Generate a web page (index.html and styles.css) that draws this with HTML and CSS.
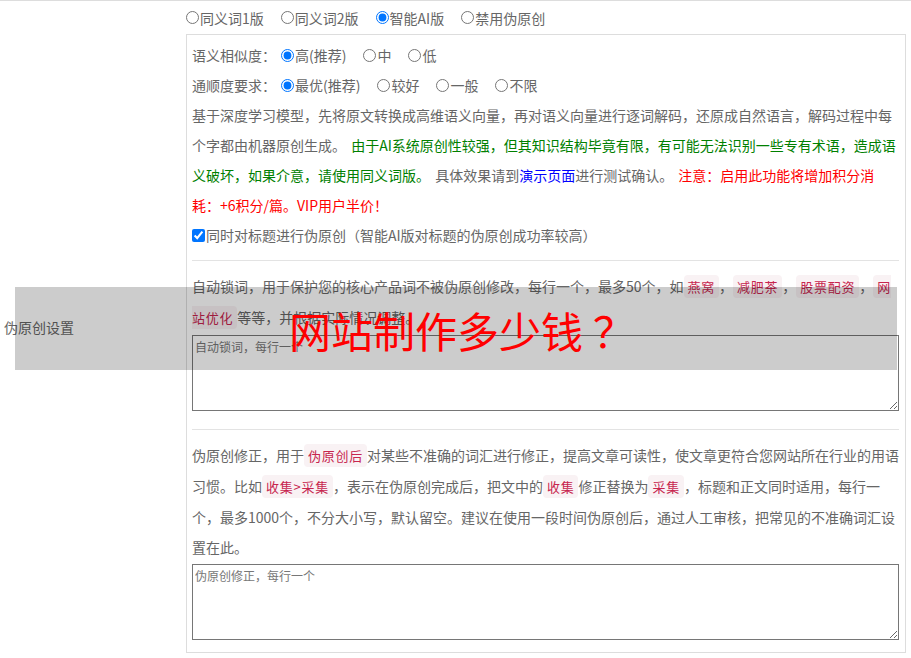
FILE: index.html
```html
<!DOCTYPE html>
<html lang="zh-CN">
<head>
<meta charset="utf-8">
<title>伪原创设置</title>
<link rel="stylesheet" href="styles.css">
</head>
<body>
<div class="form-table">
  <div class="row">
    <div class="th">伪原创设置</div>
    <div class="td">
      <div class="mode-row">
        <label class="opt"><input type="radio" name="mode">同义词1版</label>
        <label class="opt"><input type="radio" name="mode">同义词2版</label>
        <label class="opt"><input type="radio" name="mode" checked>智能AI版</label>
        <label class="opt"><input type="radio" name="mode">禁用伪原创</label>
      </div>
      <div class="panel">
        <div class="line">
          <span class="lbl">语义相似度：</span>
          <label class="opt"><input type="radio" name="sim" checked>高(推荐)</label>
          <label class="opt"><input type="radio" name="sim">中</label>
          <label class="opt"><input type="radio" name="sim">低</label>
        </div>
        <div class="line">
          <span class="lbl">通顺度要求：</span>
          <label class="opt"><input type="radio" name="flu" checked>最优(推荐)</label>
          <label class="opt"><input type="radio" name="flu">较好</label>
          <label class="opt"><input type="radio" name="flu">一般</label>
          <label class="opt"><input type="radio" name="flu">不限</label>
        </div>
        <p class="desc">基于深度学习模型，先将原文转换成高维语义向量，再对语义向量进行逐词解码，还原成自然语言，解码过程中每个字都由机器原创生成。 <span class="green">由于AI系统原创性较强，但其知识结构毕竟有限，有可能无法识别一些专有术语，造成语义破坏，如果介意，请使用同义词版。</span> 具体效果请到<a class="link" href="#">演示页面</a>进行测试确认。 <span class="red">注意：启用此功能将增加积分消耗：+6积分/篇。VIP用户半价！</span></p>
        <div class="line"><label class="chk"><input type="checkbox" checked>同时对标题进行伪原创（智能AI版对标题的伪原创成功率较高）</label></div>
        <hr class="sep">
        <p class="desc">自动锁词，用于保护您的核心产品词不被伪原创修改，每行一个，最多50个，如<code>燕窝</code>，<code>减肥茶</code>，<code>股票配资</code>，<code>网站优化</code>等等，并根据实际情况调整。</p>
        <textarea class="ta" placeholder="自动锁词，每行一个"></textarea>
        <hr class="sep sep2">
        <p class="desc">伪原创修正，用于<code>伪原创后</code>对某些不准确的词汇进行修正，提高文章可读性，使文章更符合您网站所在行业的用语习惯。比如<code>收集&gt;采集</code>，表示在伪原创完成后，把文中的<code>收集</code>修正替换为<code>采集</code>，标题和正文同时适用，每行一个，最多1000个，不分大小写，默认留空。建议在使用一段时间伪原创后，通过人工审核，把常见的不准确词汇设置在此。</p>
        <textarea class="ta" placeholder="伪原创修正，每行一个"></textarea>
      </div>
    </div>
  </div>
  <div class="overlay"><span class="overlay-text">网站制作多少钱<span class="qm">？</span></span></div>
</div>
</body>
</html>
```

FILE: styles.css
```css
html, body {
  margin: 0;
  padding: 0;
  background: #fff;
}
body {
  font-family: "Microsoft YaHei", "Noto Sans CJK SC", "Noto Sans", sans-serif;
  font-size: 14px;
  color: #666;
  text-spacing-trim: space-all;
}
.form-table {
  position: relative;
  border-top: 1px solid #ddd;
}
.row {
  display: grid;
  grid-template-columns: 186px 1fr;
}
.th {
  display: flex;
  align-items: center;
  padding-left: 4px;
  color: #666;
}
.td {
  padding: 0 5px 0 0;
}
.mode-row {
  display: flex;
  align-items: center;
  height: 33px;
}
.opt {
  display: inline-flex;
  align-items: center;
  margin-right: 17px;
  white-space: nowrap;
}
.opt input {
  margin: 0 1px 0 0;
  width: 13px;
  height: 13px;
}
.panel {
  border: 1px solid #ddd;
  padding: 5px 6px 12px 5px;
}
.line {
  display: flex;
  align-items: center;
  height: 30px;
}
.lbl {
  margin-right: 5px;
}
.desc {
  margin: 0;
  line-height: 30px;
  word-spacing: 2px;
}
.green { color: #008000; }
.red { color: #ff0000; }
.link { color: #0000ff; text-decoration: none; }
.chk {
  display: inline-flex;
  align-items: center;
}
.chk input {
  margin: 0 1px 0 0;
  width: 13px;
  height: 13px;
}
code {
  font-family: "Microsoft YaHei", "Noto Sans CJK SC", sans-serif;
  font-size: 13px;
  letter-spacing: 0.75px;
  word-spacing: 0;
  color: #c7254e;
  background: #f9f2f4;
  padding: 2px 4px;
  border-radius: 4px;
}
.sep {
  border: 0;
  border-top: 1px solid #e3e3e3;
  margin: 10px 0 10px;
}
.sep2 {
  margin-top: 18px;
}
.ta {
  display: block;
  box-sizing: border-box;
  width: 100%;
  height: 76px;
  margin-top: 2px;
  border: 1px solid #767676;
  padding: 2px;
  font-family: "Microsoft YaHei", "Noto Sans CJK SC", sans-serif;
  font-size: 12px;
}
.ta::placeholder {
  color: #777;
}
.overlay {
  position: absolute;
  left: 15px;
  top: 286px;
  width: 882px;
  height: 83px;
  background: rgba(0, 0, 0, 0.2);
  display: flex;
  align-items: center;
  justify-content: center;
}
.overlay-text {
  color: #ff0000;
  font-size: 42px;
  line-height: 1;
  margin-left: 12px;
  margin-top: 2px;
}
.qm {
  display: inline-block;
  width: 1em;
  margin-left: 10px;
}
```
